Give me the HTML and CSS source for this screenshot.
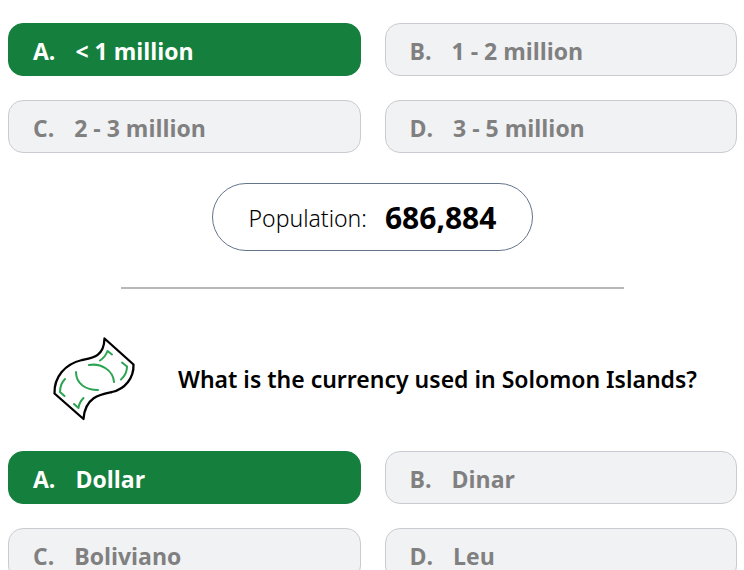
FILE: index.html
```html
<!DOCTYPE html>
<html lang="en">
<head>
    <meta charset="UTF-8">
    <meta name="viewport" content="width=device-width, initial-scale=1.0">
    <title>Country Quiz</title>
    <link rel="stylesheet" href="styles.css">
</head>
<body>
    <main class="quiz">
        <section class="question">
            <div class="answers">
                <button type="button" class="answer correct"><span>A.</span><span>&lt; 1 million</span></button>
                <button type="button" class="answer"><span>B.</span><span>1 - 2 million</span></button>
                <button type="button" class="answer"><span>C.</span><span>2 - 3 million</span></button>
                <button type="button" class="answer"><span>D.</span><span>3 - 5 million</span></button>
            </div>
            <p class="result">Population: <strong>686,884</strong></p>
        </section>

        <hr class="divider">

        <section class="question">
            <div class="question-header">
                <svg class="question-icon" viewBox="0 0 110 105" fill="none" stroke-linecap="round" stroke-linejoin="round" aria-hidden="true">
                    <path stroke="#000" stroke-width="2.3" d="M64.500 13.500L93.500 39.500C94 53 85 64 72 67C62 69 45 71 43.500 94L14.500 68.500C14 52 25 39 42 35C52 33 64 32 64.500 13.500Z"/>
                    <g stroke="#2ba452" stroke-width="2">
                        <path d="M49 40C61 38 73 45 74 57"/>
                        <path d="M36 47C36 59 46 65 58 65"/>
                        <path d="M60 35.500C64 33 66 30 67.500 26L72 29.500"/>
                        <path d="M82 37.500L87 41.500C87 46 85 51 81 54.500"/>
                        <path d="M25 54C21 58 20 62 20 67L24.500 71"/>
                        <path d="M43.500 73C40.500 76 39 79 38.500 83L34 79"/>
                    </g>
                </svg>
                <h2>What is the currency used in Solomon Islands?</h2>
            </div>
            <div class="answers">
                <button type="button" class="answer correct"><span>A.</span><span>Dollar</span></button>
                <button type="button" class="answer"><span>B.</span><span>Dinar</span></button>
                <button type="button" class="answer"><span>C.</span><span>Boliviano</span></button>
                <button type="button" class="answer"><span>D.</span><span>Leu</span></button>
            </div>
        </section>
    </main>
</body>
</html>
```

FILE: styles.css
```css
/* Overall Page Styling */
body {
    margin: 0;
    background: #fff;
    color: #000;
    font-family: "Segoe UI", "Noto Sans", "Open Sans", sans-serif;
}

.quiz {
    padding: 23px 7px 24px 8px;
}

.question {
    display: flex;
    flex-direction: column;
}

/* Answer buttons */
.answers {
    display: grid;
    grid-template-columns: 1fr 1fr;
    gap: 24px;
}

.answer {
    display: flex;
    align-items: center;
    gap: 20px;
    height: 53px;
    padding: 2px 24px 0;
    font-family: "Segoe UI", "Open Sans", sans-serif;
    font-size: 23px;
    font-weight: 700;
    line-height: 32px;
    text-align: left;
    color: #808080;
    background: #f1f2f4;
    border: 1px solid #c9cbd0;
    border-radius: 15px;
    cursor: pointer;
}

.answer.correct {
    color: #fff;
    background: #15803d;
    border-color: #15803d;
}

/* Result pill */
.result {
    display: flex;
    align-items: center;
    align-self: center;
    gap: 18px;
    margin: 30px 0 0;
    padding: 15px 36px 13px;
    font-size: 23px;
    font-weight: 300;
    line-height: 38px;
    border: 1px solid #64748b;
    border-radius: 34px;
}

.result strong {
    font-size: 30px;
    font-weight: 700;
}

.divider {
    width: 69%;
    height: 2px;
    margin: 36px auto;
    border: 0;
    background: #b8b8b8;
}

/* Question title with its icon */
.question-header {
    display: flex;
    align-items: center;
    gap: 28px;
    margin-bottom: 21px;
    padding-left: 32px;
}

.question-icon {
    flex: none;
    width: 110px;
    height: 105px;
}

.question-header h2 {
    margin: 0;
    padding-top: 2px;
    font-size: 23px;
    font-weight: 600;
    line-height: 32px;
}
```
